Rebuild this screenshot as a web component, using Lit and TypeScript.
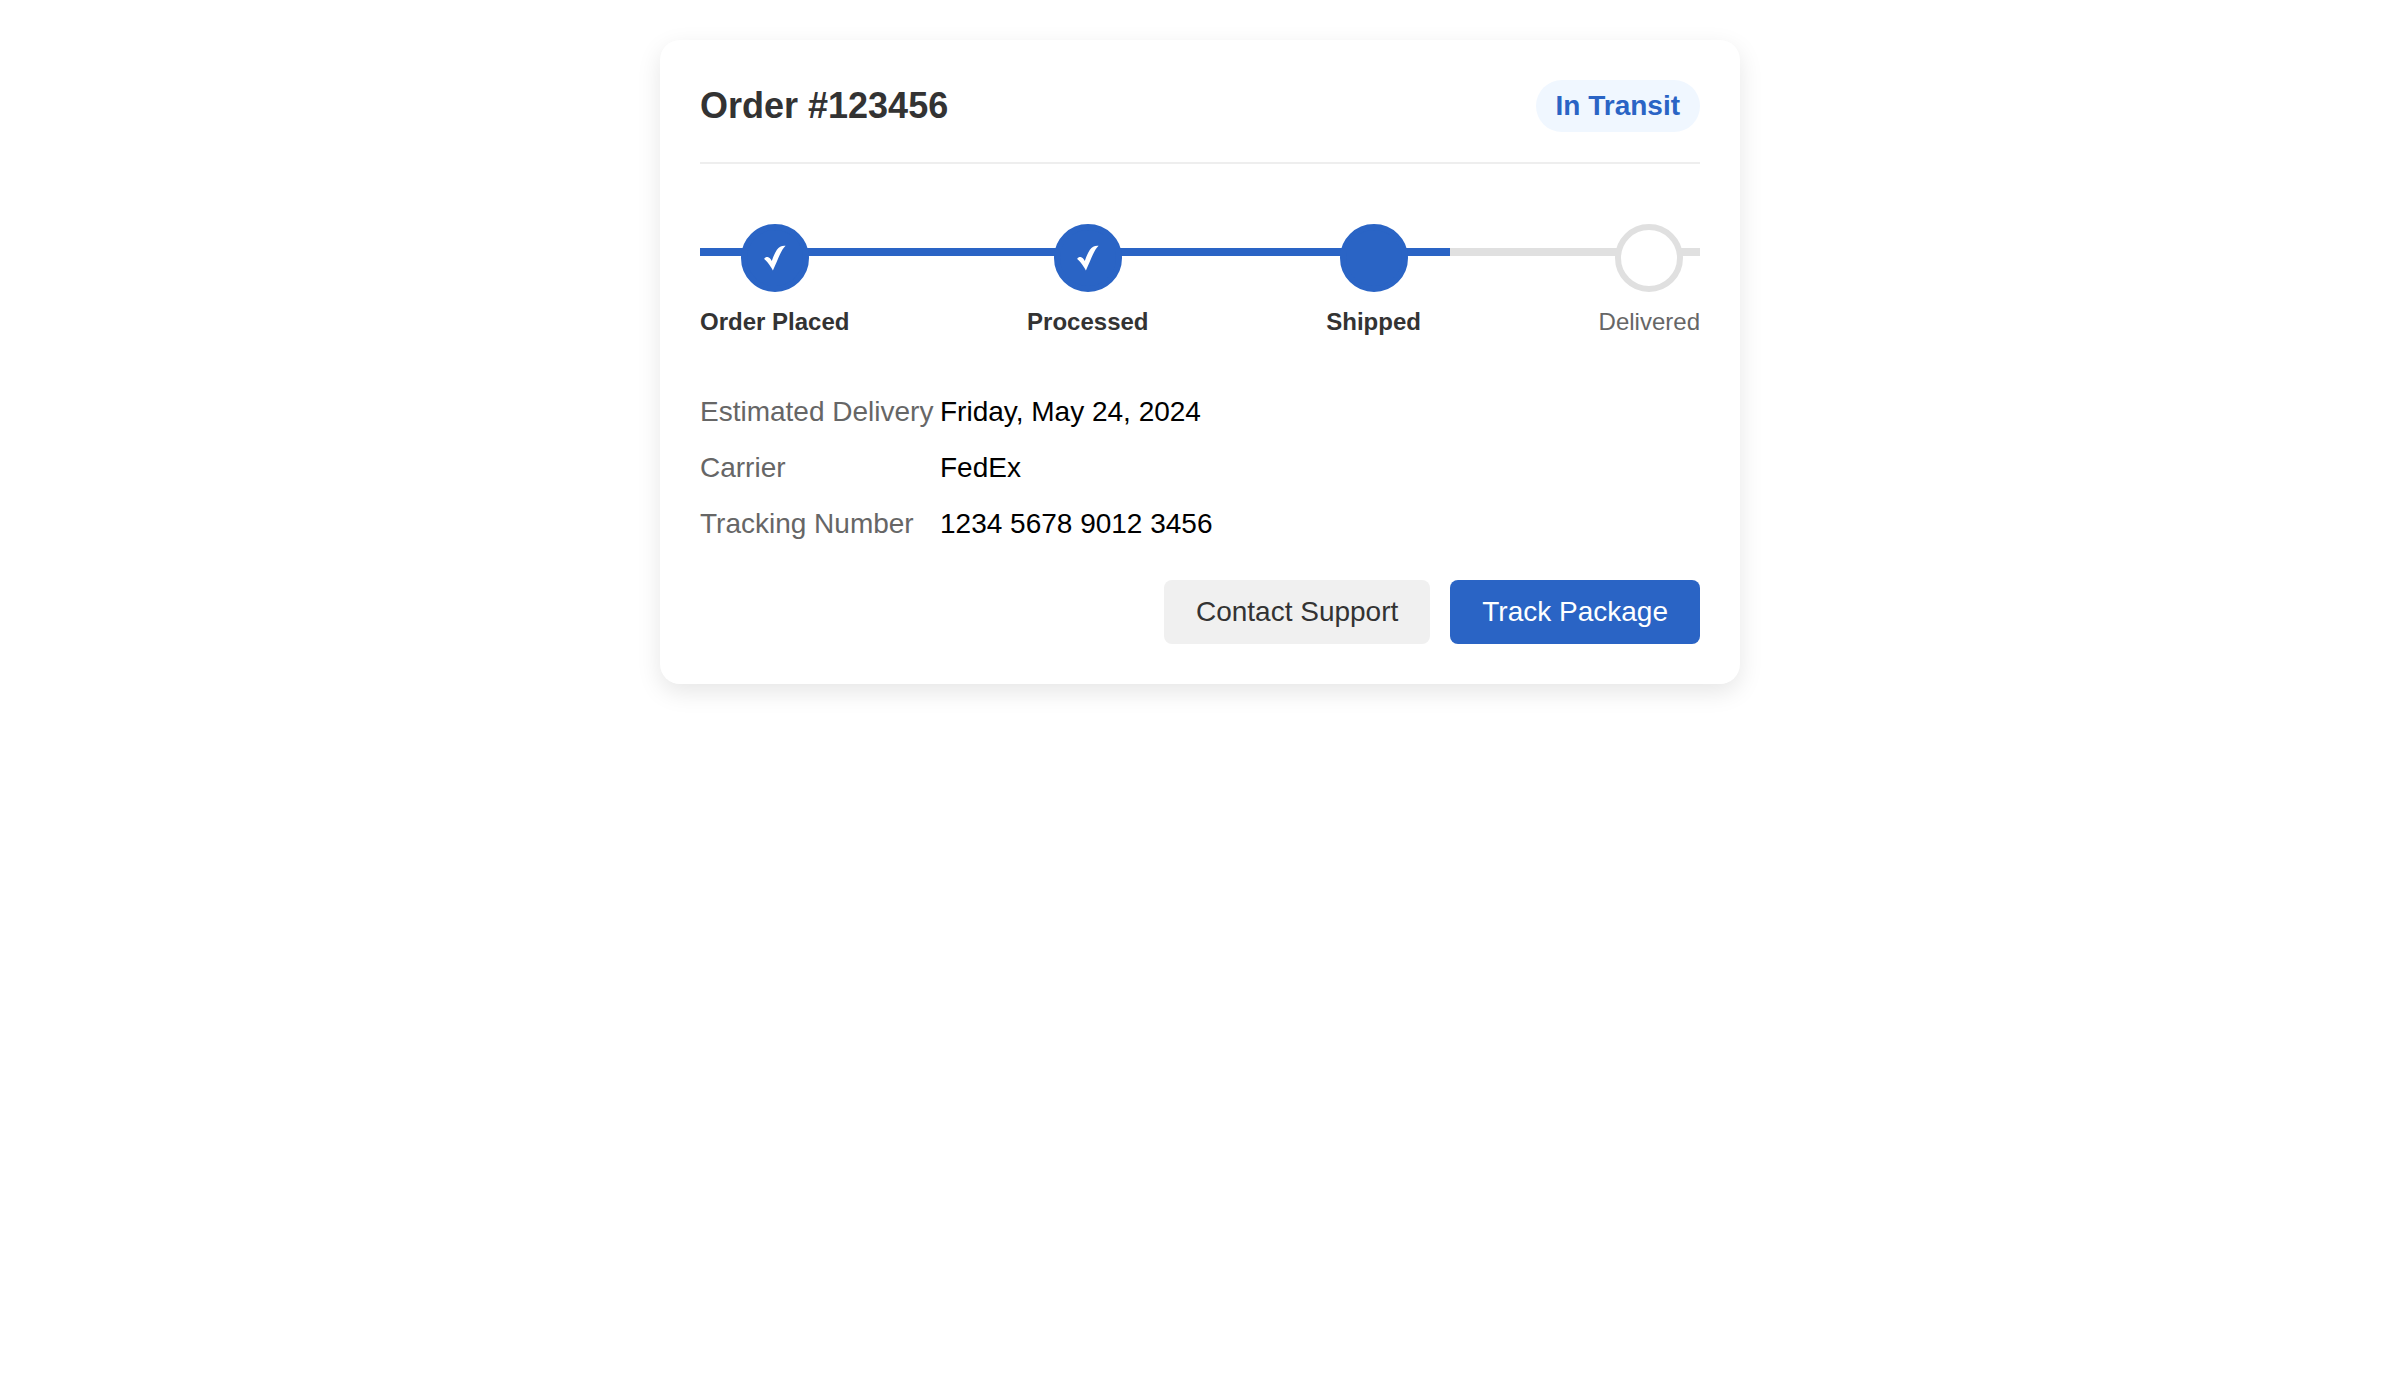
import { LitElement, html, css, nothing } from "lit";
import { customElement, property } from "lit/decorators.js";
import { classMap } from "lit/directives/class-map.js";
import { styleMap } from "lit/directives/style-map.js";

interface Step {
  label: string;
  state: "completed" | "active" | "pending";
}

@customElement("order-progress")
export class OrderProgress extends LitElement {
  @property({ attribute: false }) steps: Step[] = [];
  @property({ type: Number }) percent = 0;

  static styles = css`
    :host {
      display: block;
    }
    .track {
      position: relative;
    }
    .bar {
      position: absolute;
      top: 24px;
      left: 0;
      right: 0;
      height: 8px;
      background: #e0e0e0;
    }
    .fill {
      height: 100%;
      background: #2a64c5;
    }
    .steps {
      position: relative;
      display: flex;
      justify-content: space-between;
      margin: 0;
      padding: 0;
      list-style: none;
    }
    .step {
      display: flex;
      flex-direction: column;
      align-items: center;
      gap: 16px;
      color: #666;
      font-size: 24px;
      line-height: 28px;
    }
    .dot {
      display: flex;
      align-items: center;
      justify-content: center;
      box-sizing: border-box;
      width: 68px;
      height: 68px;
      border: 6px solid #e0e0e0;
      border-radius: 50%;
      background: #fff;
    }
    .reached {
      color: #333;
      font-weight: bold;
    }
    .reached .dot {
      border-color: #2a64c5;
      background: #2a64c5;
    }
    .check {
      display: block;
      width: 22px;
      height: 26px;
      fill: #fff;
    }
  `;

  render() {
    return html`
      <div class="track">
        <div class="bar">
          <div class="fill" style=${styleMap({ width: `${this.percent}%` })}></div>
        </div>
        <ol class="steps">
          ${this.steps.map(
            (step) => html`
              <li class=${classMap({ step: true, reached: step.state !== "pending" })}>
                <span class="dot">
                  ${step.state === "completed"
                    ? html`<svg class="check" viewBox="0 0 22 26" aria-hidden="true">
                        <path
                          d="M.2 13.900C.6 12.600 2 12 3.600 12C5.300 12.200 6.700 13.800 7.800 15.900C9.300 11.500 10.900 7.800 12.900 4.800C15.200 1.500 17.600 .5 21.600 .8C19.400 3 17.600 5.800 15.900 9.600C13.800 14.200 11.700 19.500 8.900 25.400C7.200 22.400 5.700 20.300 4.200 18.300C2.900 16.500 1.800 15 .2 13.900Z"
                        />
                      </svg>`
                    : nothing}
                </span>
                <span>${step.label}</span>
              </li>
            `
          )}
        </ol>
      </div>
    `;
  }
}

@customElement("app-root")
export class AppRoot extends LitElement {
  private steps: Step[] = [
    { label: "Order Placed", state: "completed" },
    { label: "Processed", state: "completed" },
    { label: "Shipped", state: "active" },
    { label: "Delivered", state: "pending" },
  ];

  private details = [
    { term: "Estimated Delivery", value: "Friday, May 24, 2024" },
    { term: "Carrier", value: "FedEx" },
    { term: "Tracking Number", value: "1234 5678 9012 3456" },
  ];

  static styles = css`
    :host {
      display: block;
      padding: 40px;
      font-family: "Liberation Sans", Arial, sans-serif;
      font-size: 28px;
      line-height: 32px;
      color: #000;
    }
    .card {
      box-sizing: border-box;
      max-width: 1080px;
      margin: 0 auto;
      padding: 40px;
      border-radius: 20px;
      background: #fff;
      box-shadow: 0 8px 24px rgba(0, 0, 0, 0.1);
    }
    .header {
      display: flex;
      align-items: center;
      justify-content: space-between;
      padding-bottom: 30px;
      margin-bottom: 60px;
      border-bottom: 2px solid #eee;
    }
    .title {
      margin: 0;
      color: #333;
      font-size: 36px;
      line-height: 40px;
      font-weight: bold;
    }
    .status {
      padding: 10px 20px;
      border-radius: 26px;
      background: #f0f7ff;
      color: #2a64c5;
      font-weight: bold;
    }
    .details {
      display: flex;
      flex-direction: column;
      gap: 24px;
      margin: 60px 0 40px;
    }
    .row {
      display: flex;
    }
    .term {
      flex: none;
      width: 240px;
      color: #666;
    }
    .value {
      margin: 0;
    }
    .actions {
      display: flex;
      justify-content: flex-end;
      gap: 20px;
    }
    .button {
      padding: 16px 32px;
      border: 0;
      border-radius: 8px;
      font: inherit;
      cursor: pointer;
    }
    .secondary {
      background: #f0f0f0;
      color: #333;
    }
    .primary {
      background: #2a64c5;
      color: #fff;
    }
  `;

  render() {
    return html`
      <main class="card">
        <header class="header">
          <h1 class="title">Order #123456</h1>
          <span class="status">In Transit</span>
        </header>
        <order-progress .steps=${this.steps} .percent=${75}></order-progress>
        <dl class="details">
          ${this.details.map(
            (item) => html`
              <div class="row">
                <dt class="term">${item.term}</dt>
                <dd class="value">${item.value}</dd>
              </div>
            `
          )}
        </dl>
        <div class="actions">
          <button class="button secondary" type="button">Contact Support</button>
          <button class="button primary" type="button">Track Package</button>
        </div>
      </main>
    `;
  }
}
